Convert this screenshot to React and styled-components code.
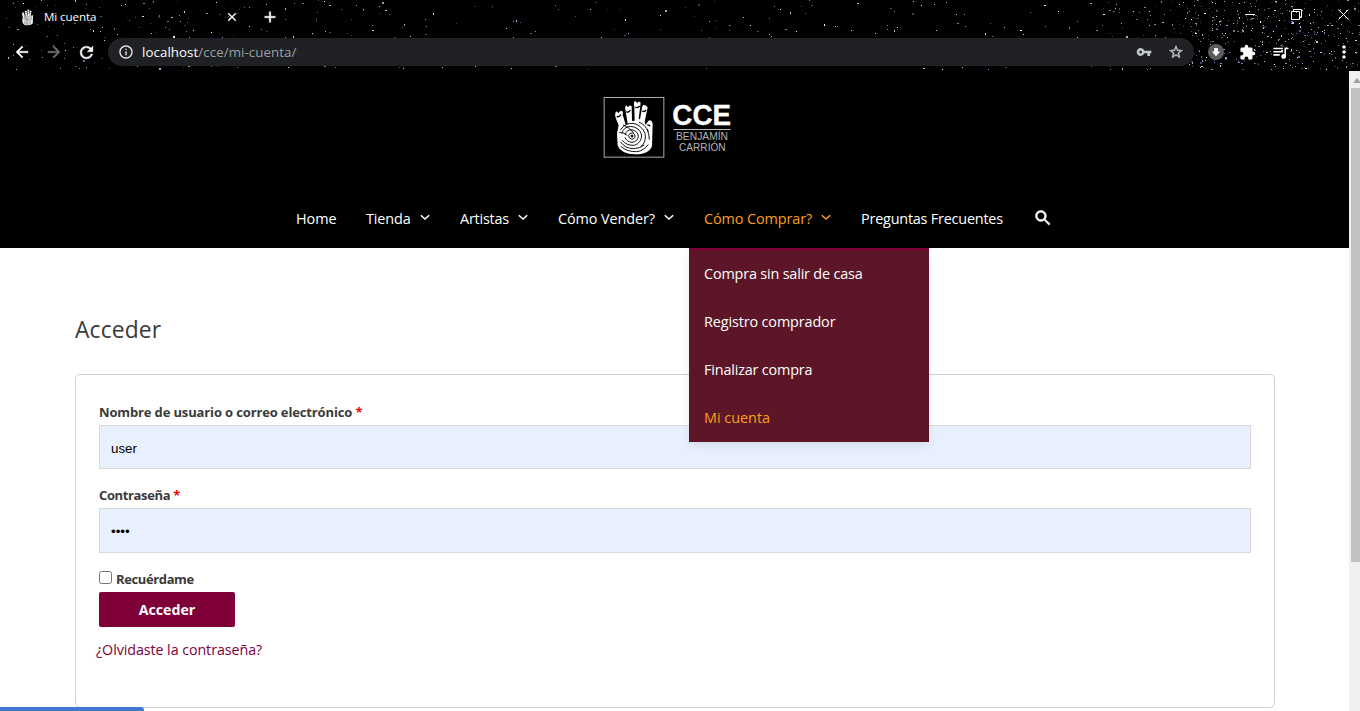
import React from "react";
import styled, { createGlobalStyle } from "styled-components";
import {
  MdArrowBack, MdArrowForward, MdRefresh, MdInfoOutline, MdVpnKey, MdStarBorder,
  MdExtension, MdQueueMusic, MdMoreVert, MdClose, MdAdd, MdSearch,
} from "react-icons/md";

const ui = '"Open Sans", "Noto Sans", sans-serif';

const GlobalStyle = createGlobalStyle`
  *, *::before, *::after { box-sizing: border-box; }
  body { margin: 0; overflow: hidden; background: #fff; font-family: ${ui}; }
  /* the icon set's invisible bounding squares must not take a stroke */
  svg > path[fill="none"] { stroke: none; }
`;

const Screen = styled.div`
  position: relative;
  width: 1360px;
  height: 711px;
  overflow: hidden;
  display: flex;
  flex-direction: column;
`;

/* Browser frame */
const Chrome = styled.header`
  position: relative;
  height: 71px;
  background: #000;
  color: #fff;
  flex: none;
`;
const Sky = styled.svg`
  position: absolute;
  inset: 0;
`;
const ChromeRow = styled.div`
  position: relative;
  display: flex;
  align-items: center;
  height: ${(p) => p.$h}px;
  svg { flex: none; display: block; }
`;
const Tab = styled.div`
  display: flex;
  align-items: center;
  width: 239px;
  height: 34px;
  padding-left: 20px;
`;
const TabTitle = styled.span`
  flex: 1;
  margin-left: 9px;
  font-size: 11.6px;
  line-height: 16px;
  letter-spacing: -0.1px;
`;
const NewTab = styled.span`
  margin-left: 22px;
`;
const WindowControls = styled.div`
  display: flex;
  align-items: center;
  gap: 36px;
  height: 28px;
  align-self: flex-start;
  margin-left: auto;
  padding-right: 11px;
`;
const NavButtons = styled.div`
  display: flex;
  align-items: center;
  gap: 14px;
  width: 84px;
  margin-left: 13px;
  svg { stroke: currentColor; stroke-width: 0.6; }
`;
const Omnibox = styled.div`
  display: flex;
  align-items: center;
  width: 1086px;
  height: 28px;
  margin-left: 11px;
  padding: 0 10px;
  border-radius: 14px;
  background: #202124;
`;
const Url = styled.span`
  flex: 1;
  margin-left: 8px;
  font-size: 13.3px;
  line-height: 20px;
  letter-spacing: 0.07px;
  color: #9aa0a6;
  b { font-weight: 400; color: #fff; }
`;
const OmniActions = styled.div`
  display: flex;
  gap: 16px;
  color: #c4c7ca;
`;
const Extensions = styled.div`
  display: flex;
  align-items: center;
  gap: 15px;
  margin-left: 14px;
`;
const DownloadBadge = styled.span`
  display: grid;
  place-items: center;
  width: 16px;
  height: 16px;
  border-radius: 50%;
  background: #5c5c5c;
`;
const MenuDots = styled.div`
  margin-left: auto;
  margin-right: 6px;
`;

/* Page */
const Viewport = styled.div`
  display: flex;
  flex: 1;
  min-height: 0;
`;
const Page = styled.main`
  width: 1349px;
  height: 640px;
  overflow: hidden;
`;
const SiteHeader = styled.div`
  height: 177px;
  padding-top: 14px;
  background: #000;
`;
const Logo = styled.svg`
  display: block;
  margin-left: 590px;
`;
const Menu = styled.nav`
  display: grid;
  grid-template-columns: 70px 94px 98px 146px 157px 172px 50px;
  height: 60px;
  margin: 18px 0 0 281px;
`;
const MenuItem = styled.div`
  position: relative;
  display: flex;
  align-items: center;
  justify-content: space-between;
  padding: 0 15px;
  color: ${(p) => (p.$active ? "#f9a01b" : "#fff")};
  svg { flex: none; display: block; }
`;
const MenuLabel = styled.span`
  padding-top: 2px;
  font-size: 14.4px;
  line-height: 20px;
  letter-spacing: ${(p) => p.$track || 0}px;
  white-space: nowrap;
`;
const SubMenu = styled.div`
  position: absolute;
  z-index: 2;
  top: 60px;
  left: 0;
  width: 240px;
  border-top: 2px solid #80003a;
  background: rgba(80, 4, 23, 0.93);
  box-shadow: 0 4px 10px -2px rgba(0, 0, 0, 0.12);
`;
const SubItem = styled.div`
  display: flex;
  align-items: center;
  height: 48px;
  padding: 0 15px 2px;
  color: ${(p) => (p.$active ? "#f9a01b" : "#fff")};
`;
const Content = styled.section`
  width: 1200px;
  margin-left: 75px;
  padding-top: 62px;
`;
const Heading = styled.h2`
  margin: 0;
  font-size: 22.8px;
  font-weight: 400;
  line-height: 40px;
  letter-spacing: 0.15px;
  color: #3a3a3a;
`;
const LoginCard = styled.form`
  height: 334px;
  margin-top: 24px;
  padding: 27px 23px 0;
  border: 1px solid #d0d0d0;
  border-radius: 5px;
`;
const Label = styled.label`
  display: block;
  height: ${(p) => p.$h}px;
  font-size: 13px;
  font-weight: 700;
  line-height: ${(p) => p.$line}px;
  letter-spacing: ${(p) => p.$track}px;
  color: #3a3a3a;
  em { font-style: normal; color: #f00; }
`;
const Field = styled.input`
  display: block;
  width: 1152px;
  height: ${(p) => p.$h}px;
  margin-bottom: 15px;
  padding: 2px 11px 0;
  border: 1px solid #d9d9dc;
  border-radius: 0;
  outline: 0;
  background: #e8f0fe;
  color: #000;
  font: 13.333px "Liberation Sans", Arial, sans-serif;
`;
const Remember = styled.label`
  display: flex;
  align-items: center;
  height: 24px;
  padding-bottom: 2px;
  gap: 4px;
  font-size: 13px;
  font-weight: 700;
  letter-spacing: -0.38px;
  color: #3a3a3a;
  input { width: 13px; height: 13px; margin: 0 0 3px; }
`;
const Submit = styled.button`
  display: block;
  width: 136px;
  height: 35px;
  border: 0;
  border-radius: 2px;
  background: #80003a;
  color: #fff;
  font: 700 14.2px ${ui};
  letter-spacing: 0;
`;
const LostLink = styled.a`
  display: block;
  margin: 12px 0 0 -3px;
  font-size: 14.3px;
  line-height: 22px;
  letter-spacing: -0.08px;
  color: #80003a;
`;
const Scrollbar = styled.div`
  width: 11px;
  padding-left: 2px;
  background: #f0f0f0;
  overflow: hidden;
`;
const ScrollArrow = styled.div`
  height: 17px;
  padding: 7px 0 0 2px;
  svg { display: block; }
`;
const ScrollThumb = styled.div`
  height: 474px;
  background: #c1c1c1;
`;
const StatusBar = styled.div`
  position: absolute;
  left: 0;
  bottom: 0;
  width: 144px;
  height: 4px;
  border-top-right-radius: 3px;
  background: #4377cf;
`;

/* x, y, brightness for the stars of the theme's middle band */
const namedStars = [
  [382,2,.6],[379,6,.8],[363,10,.5],[379,13,.3],[372,25,.5],[372,30,.95],[402,27,.7],[404,24,.8],[425,19,.6],[426,26,.7],[425,34,.6],
  [351,19,.3],[351,35,.3],[475,6,.4],[492,6,.4],[394,37,.3],[506,28,.8],[513,21,.8],[520,22,.6],[535,31,.7],[530,33,.4],[513,37,.8],
  [555,5,.9],[558,9,.5],[575,16,.3],[595,2,.3],[607,9,.3],[620,9,.3],[625,19,.9],[628,33,1],[624,35,.6],[614,29,.3],[660,15,.9],
  [685,7,.3],[694,16,.4],[698,4,.3],[701,30,.4],[709,21,.8],[716,20,.5],[716,27,.3],[729,25,.4],[729,30,.4],[709,37,.6],
  [743,17,.9],[750,25,.9],[757,31,.4],[769,18,.8],[769,34,.9],[780,9,.9],[790,12,.9],[785,29,.9],[796,31,1],[801,6,.3],[805,13,.5],
  [809,0,.8],[811,5,.4],[824,24,1],[835,26,.9],[837,26,.8],[851,30,1],[857,3,.7],[875,33,.9],[887,29,.9],[894,30,.9],[897,27,.9],
  [890,8,.4],[894,11,.9],[913,1,1],[921,5,.9],[934,4,1],[912,13,.5],[936,30,.9],[956,14,.8],[964,14,.7],[965,26,1],[957,23,.6],
  [946,2,.7],[985,33,.9],[990,23,.6],[1004,27,.8],[1020,30,1],[1030,12,.5],[1077,21,.9],[1077,37,.9],[1069,27,.5],[1096,30,.6],
  [399,67,.6],[403,68,.9],[442,67,.7],[511,68,.9],[555,66,.8],[588,69,.3],[942,69,.9],[962,67,.9],[988,69,1],[1005,67,.4],[1091,66,.4],
  [125,4,.9],[159,15,.8],[180,21,.8],[206,13,.6],[249,26,1],[294,3,.8],[312,33,1],[285,19,.5],[159,68,.8],[211,66,.8],[335,67,.6],
];

function scatter(seed, count, x0, x1, min) {
  let s = seed;
  const next = () => ((s = (s * 16807) % 2147483647) / 2147483647);
  return Array.from({ length: count }, () => [
    Math.floor(x0 + next() * (x1 - x0)),
    Math.floor(next() * 70),
    min + next() * (1 - min),
  ]);
}
const stars = [
  ...namedStars,
  ...scatter(7177, 190, 5, 340, 0.12),
  ...scatter(8311, 40, 340, 1100, 0.1),
  ...scatter(1963, 130, 1100, 1200, 0.1),
  ...scatter(3741, 430, 1190, 1360, 0.12),
];
const tints = ["#fff", "#b8d8ff", "#7897dc", "#c8d8ff"];

const Stars = () => (
  <Sky width="1360" height="70" shapeRendering="crispEdges">
    {stars.map(([x, y, o], i) => (
      <rect key={i} x={x} y={y} width={i % 5 === 0 ? 2 : 1} height={i % 7 === 0 ? 2 : 1} fill={tints[i % 4]} opacity={o} />
    ))}
  </Sky>
);

const handOutline =
  "M83 182 L81 145 L86 121 L77 98 Q73 86 79 79 L85 84 Q90 77 96 77 Q101 80 98 89 L107 119 L113 116 L107 79 Q103 68 108 60 L114 67 Q119 58 125 64 L126 108 L134 107 L133 66 Q130 52 135 47 L142 54 Q147 47 152 53 L146 101 L150 103 L155 75 Q155 64 160 59 Q169 60 173 67 L164 110 L166 119 L171 114 Q174 105 180 106 Q188 108 188 119 L186 182 Q180 206 136 208 Q93 207 83 182Z";

const Hand = () => (
  <>
    <path d={handOutline} fill="#fff" />
    <g fill="none" stroke="#000" strokeWidth="2.8">
      <ellipse cx="126" cy="153" rx="3" ry="3" fill="#000" />
      <path d="M116 151 Q118 143 128 144 Q137 147 135 157 Q132 164 123 162 Q116 160 116 151" />
      <path d="M106 148 Q109 135 125 134 Q144 138 145 154 Q143 170 126 172 Q109 170 105 157" />
      <path d="M96 145 Q100 126 122 124 Q149 127 155 150 Q155 173 133 181 Q109 182 97 166" />
      <path d="M91 135 Q106 113 129 115 Q154 119 165 145 Q170 169 153 185 M91 170 Q106 191 131 191 Q151 190 163 180" />
      <path d="M99 119 Q118 128 131 143 M88 142 Q102 143 112 151 M171 132 Q178 148 178 164 M147 111 Q165 119 176 140 M92 184 Q112 201 140 200 Q161 198 175 178" />
      <path d="M80 94 Q87 98 93 89 M109 80 Q116 84 121 75 M136 66 Q142 71 149 63 M157 78 Q163 82 168 75 M172 119 L181 123" strokeWidth="4" />
    </g>
  </>
);

const Chevron = () => (
  <svg width="10" height="20" viewBox="0 0 10 20">
    <g fill="none" stroke="currentColor" strokeWidth="1.5"><path d="M.8 7.2 L5 11 L9.2 7.2" /></g>
  </svg>
);

const menu = [
  { label: "Home" },
  { label: "Tienda", sub: true, track: -0.1 },
  { label: "Artistas", sub: true, track: -0.2 },
  { label: "Cómo Vender?", sub: true, track: -0.08 },
  {
    label: "Cómo Comprar?",
    sub: true,
    active: true,
    track: -0.08,
    items: [
      { label: "Compra sin salir de casa", track: -0.17 },
      { label: "Registro comprador", track: -0.12 },
      { label: "Finalizar compra", track: -0.17 },
      { label: "Mi cuenta", active: true },
    ],
  },
  { label: "Preguntas Frecuentes", track: -0.2 },
];

export default function App() {
  return (
    <Screen>
      <GlobalStyle />
      <Chrome>
        <Stars />
        <ChromeRow $h={34}>
          <Tab>
            <svg width="15" height="17" viewBox="70 45 125 170"><Hand /></svg>
            <TabTitle>Mi cuenta</TabTitle>
            <MdClose size={14} stroke="#fff" strokeWidth={0.6} />
          </Tab>
          <NewTab><MdAdd size={18} stroke="#fff" strokeWidth={0.6} /></NewTab>
          <WindowControls>
            <svg width="10" height="10"><path d="M0 5.5H10" stroke="#fff" /></svg>
            <svg width="11" height="11" fill="none" stroke="#fff"><path d="M.5 2.5H8.5V10.5H.5ZM2.5 2.5V.5H10.5V8.5H8.5" /></svg>
            <svg width="11" height="11" stroke="#fff"><path d="M.5 .5L10.5 10.5M10.5 .5L.5 10.5" /></svg>
          </WindowControls>
        </ChromeRow>
        <ChromeRow $h={36}>
          <NavButtons>
            <MdArrowBack size={18} />
            <MdArrowForward size={18} color="#6f7072" />
            <MdRefresh size={19} />
          </NavButtons>
          <Omnibox>
            <MdInfoOutline size={16} color="#e8eaed" />
            <Url><b>localhost</b>/cce/mi-cuenta/</Url>
            <OmniActions>
              <MdVpnKey size={16} />
              <MdStarBorder size={16} stroke="currentColor" strokeWidth={0.5} />
            </OmniActions>
          </Omnibox>
          <Extensions>
            <DownloadBadge>
              <svg width="10" height="10" fill="#fff"><path d="M3.2 1H6.8V4.6H9.2L5 9.2L.8 4.6H3.2Z" /></svg>
            </DownloadBadge>
            <MdExtension size={17} />
            <MdQueueMusic size={19} />
          </Extensions>
          <MenuDots><MdMoreVert size={20} /></MenuDots>
        </ChromeRow>
      </Chrome>

      <Viewport>
        <Page>
          <SiteHeader>
            <Logo width="160" height="85" viewBox="0 0 480 255" fontFamily="Liberation Sans, Arial, sans-serif">
              <g fill="none" stroke="#aaa" strokeWidth="3"><rect x="42.5" y="37.5" width="179" height="179" /></g>
              <Hand />
              <text x="247" y="121" fontSize="87" fontWeight="700" fill="#fff" stroke="#fff" strokeWidth="1" textLength="176" lengthAdjust="spacingAndGlyphs">CCE</text>
              <path d="M250 133.5H422" stroke="#bbb" strokeWidth="3" />
              <text x="258" y="165" fontSize="31" fill="#b5b5b5" textLength="156" lengthAdjust="spacingAndGlyphs">BENJAMÍN</text>
              <text x="267" y="197" fontSize="31" fill="#b5b5b5" textLength="140" lengthAdjust="spacingAndGlyphs">CARRIÓN</text>
            </Logo>
            <Menu>
              {menu.map((m) => (
                <MenuItem key={m.label} $active={m.active}>
                  <MenuLabel $track={m.track}>{m.label}</MenuLabel>
                  {m.sub && <Chevron />}
                  {m.items && (
                    <SubMenu>
                      {m.items.map((t) => (
                        <SubItem key={t.label} $active={t.active}>
                          <MenuLabel $track={t.track}>{t.label}</MenuLabel>
                        </SubItem>
                      ))}
                    </SubMenu>
                  )}
                </MenuItem>
              ))}
              <MenuItem><MdSearch size={20} stroke="#fff" strokeWidth={0.8} /></MenuItem>
            </Menu>
          </SiteHeader>
          <Content>
            <Heading>Acceder</Heading>
            <LoginCard>
              <Label $h={23} $line={21} $track={-0.14}>Nombre de usuario o correo electrónico <em>*</em></Label>
              <Field $h={44} defaultValue="user" />
              <Label $h={24} $line={23} $track={-0.36}>Contraseña <em>*</em></Label>
              <Field $h={45} type="password" defaultValue="user" />
              <Remember><input type="checkbox" />Recuérdame</Remember>
              <Submit type="button">Acceder</Submit>
              <LostLink>¿Olvidaste la contraseña?</LostLink>
            </LoginCard>
          </Content>
        </Page>
        <Scrollbar>
          <ScrollArrow><svg width="8" height="5"><path d="M0 5L4 0L8 5Z" fill="#a0a0a0" /></svg></ScrollArrow>
          <ScrollThumb />
        </Scrollbar>
      </Viewport>
      <StatusBar />
    </Screen>
  );
}
